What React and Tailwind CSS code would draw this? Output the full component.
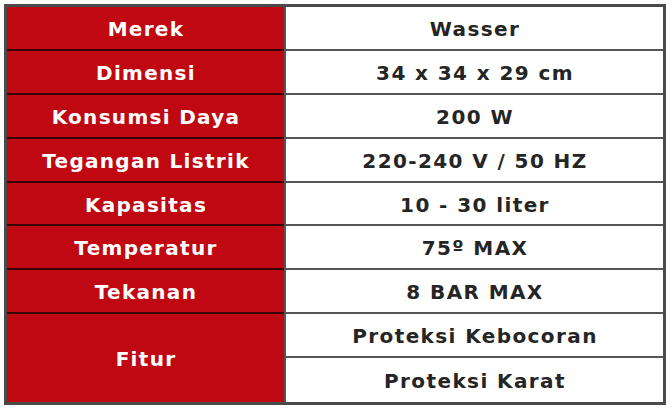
import React from "react";

const rows = [
  ["Merek", "Wasser"],
  ["Dimensi", "34 x 34 x 29 cm"],
  ["Konsumsi Daya", "200 W"],
  ["Tegangan Listrik", "220-240 V / 50 HZ"],
  ["Kapasitas", "10 - 30 liter"],
  ["Temperatur", "75º MAX"],
  ["Tekanan", "8 BAR MAX"],
];

const L = "bg-[#c00812] text-white flex items-center justify-center pt-[2px] pl-[1px] tracking-[1.3px]";
const R = "bg-white text-[#252525] flex items-center justify-center border-l-2 border-[#555] pt-[2px] pl-[1px] tracking-[1.4px]";

export default function App() {
  const font = { fontFamily: '"DejaVu Sans", "Noto Sans", sans-serif' };
  return (
    <div className="w-[672px] h-[412px] bg-white pt-[4px] pl-[4px]" style={font}>
      <div className="w-[662px] border-[3px] border-[#4a4a4a] grid grid-cols-[277px_1fr] grid-rows-[repeat(9,43.9px)] text-[20px] font-bold">
        {rows.map(([k, v]) => (
          <React.Fragment key={k}>
            <div className={L + " border-b-2 border-black/70"}>{k}</div>
            <div className={R + " border-b-2"}>{v}</div>
          </React.Fragment>
        ))}
        <div className={L + " row-span-2"}>Fitur</div>
        <div className={R + " border-b-2"}>Proteksi Kebocoran</div>
        <div className={R}>Proteksi Karat</div>
      </div>
    </div>
  );
}
